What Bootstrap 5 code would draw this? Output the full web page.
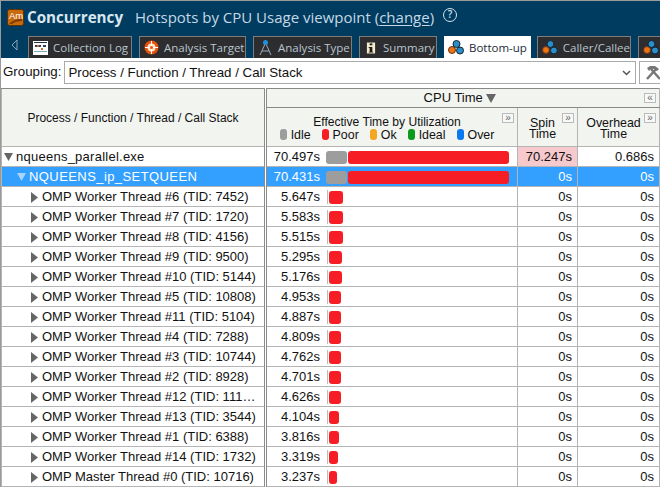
<!DOCTYPE html>
<html lang="en"><head><meta charset="utf-8"><title>Concurrency</title>
<link href="https://cdn.jsdelivr.net/npm/bootstrap@5.3.0/dist/css/bootstrap.min.css" rel="stylesheet">
<style>
html,body{margin:0;background:#fff;overflow:hidden}
body{width:660px;height:487px;font-family:"Liberation Sans",Arial,sans-serif;font-size:13px;color:#111}
.shell{width:660px;height:487px;border-top:1px solid #9a9a9a;border-left:1px solid #9a9a9a;overflow:hidden}
.topbar{background:#003c5f;height:57px;color:#cfe0ec;font-family:"Open Sans",sans-serif}
.titlerow{height:32px;padding-left:6px;gap:3px;white-space:nowrap}
.apptitle{font-weight:700;font-size:15.2px;color:#d8e6f0;margin-right:9px}
.viewname{font-size:15px;font-weight:400;color:#c6d8e5}
.viewname u{text-underline-offset:2px}
.helpmark{width:14px;height:14px;border:1.5px solid #d6e3ee;border-radius:50%;font-size:10px;line-height:11px;text-align:center;margin-left:6px;margin-bottom:4px;color:#d6e3ee;font-weight:600}
.tabrow{height:25px;white-space:nowrap;padding-left:10px;gap:7px;overflow:hidden}
.backarrow{flex:none;width:7px;margin-right:3px;margin-bottom:2px}
.vtab{height:22px;margin-top:3px;background:#2d2d2f;border:1px solid #7d7d7d;border-bottom:0;color:#b9c5cf;font-size:11.5px;padding:0 0 0 4px;gap:5px;flex:none}
.vtab.onpage{background:#fff;color:#1c2b3a;border-color:#fff;padding-left:3px;margin-right:-1px}
.tw-log{width:104px}.tw-target{width:107px}.tw-type{width:99px}.tw-sum{width:78px;padding-left:6px;gap:7px}.tw-bottom{width:87px}.tw-caller{width:94px}.tw-next{width:40px}
.grouprow{height:30px;padding:3px 0 0 2px;gap:2px;font-size:13.3px}
.grouplabel{line-height:22px;margin-right:1px}
.groupfield{width:572px;height:23px;border:1px solid #aaa;padding:1px 4px 0 3px;color:#111;flex:none}
.toolbtn{width:30px;height:23px;border:1px solid #aaa;margin-left:1px;flex:none;padding-left:4px}
.grid{table-layout:fixed;width:659px;border-collapse:collapse;margin:0;font-size:13px}
.grid th,.grid td{padding:1px 0 0;border:1px solid #b4b4b4;font-weight:400;height:20px;line-height:18px;white-space:nowrap;overflow:hidden;color:#111;background:#fff}
.grid thead th{background:#f2f4f0;text-align:center;font-size:12.1px;line-height:15px;position:relative;padding-top:0}
.grid tr:first-child th{border-top:1px solid #888}
.grid th.thick,.grid td.thick{border-right:3px double #8b8b8b}
.grid .hdrrule{border-bottom:1px solid #888}
.grid thead tr.low th{height:39px;vertical-align:top;padding:7px 10px 0 0}
.grid thead tr.top th{height:19px;line-height:16px}
.grid thead th.sidehead{vertical-align:middle;font-size:12px}
.grid thead th.cputitle{font-size:13px;padding-right:6px}
.grid thead tr.low th.stack2{font-size:12.4px;line-height:11px;padding-top:10px;padding-right:10px}
.keyset{gap:11px;justify-content:center;font-size:12.4px;line-height:14px;margin-top:-2px}
.keychip{width:7px;height:11px;border-radius:3px;display:inline-block;margin-right:4px;vertical-align:-1px}
.pin{position:absolute;top:5px;right:3px;width:12px;height:10px;border:1px solid #bbb;background:#f8f8f8;font-size:10px;line-height:7px;color:#666;text-align:center}
.tr-top-pin{top:4px}
.num{text-align:right;padding-right:5px!important}
.treecell{padding-left:2px!important;position:relative}
.tree0{padding-left:12px;letter-spacing:.25px}
.tree1{padding-left:25px;letter-spacing:.42px}
.tree2{padding-left:38px}
.twist{position:absolute;top:6px}
.hot{background:#f6c9cd!important}
.grid tr.picked td{background:#33a0ff;color:#fff;border-top:1px dashed #000;border-bottom:1px dashed #000}
.barcell{display:flex;height:18px;align-items:center}
.timeval{width:53px;text-align:right;flex:none}
.barzone{display:flex;align-items:center;margin-left:6px;height:14px}
.tickzone{margin-left:7px;border-left:1px solid #bbb}
.idlebar{height:13px;background:#9d9d9d;border-radius:3px;flex:none;width:21px}
.poorbar{height:13px;background:#f61e24;border-radius:3px;flex:none;margin-left:1px}
</style></head><body>
<div class="shell">
<div class="topbar">
 <div class="titlerow d-flex align-items-center">
  <svg width="17" height="17" viewBox="0 0 17 17"><rect x=".5" y=".5" width="16" height="16" rx="2" fill="#c8690c" stroke="#5b3208"/><path d="M2 15C6 11 10 10 15 10v2C11 12 7 13 5 15z" fill="#7a3d06"/><text x="2" y="10" font-size="9.500" font-family="Liberation Sans" fill="#fff">Am</text></svg>
  <span class="apptitle">Concurrency</span>
  <span class="viewname">Hotspots by CPU Usage viewpoint (<u>change</u>)</span>
  <span class="helpmark">?</span>
 </div>
 <div class="tabrow d-flex">
  <svg class="backarrow align-self-center" width="7" height="12" viewBox="0 0 7 12"><path d="M6 1 1 6l5 5z" fill="none" stroke="#8fa5b3"/></svg>
  <div class="vtab tw-log d-flex align-items-center"><svg width="15" height="14" viewBox="0 0 15 14"><rect width="15" height="14" fill="#fff"/><rect x="1" y="1" width="13" height="1" fill="#234"/><path d="M2 4h2v2H2zM6 4h2v2H6zM10 4h3v2h-3z" fill="#246"/><path d="M4 4h2v2H4zM8 7h2v2H8z" fill="#d63"/><rect x="1" y="10" width="13" height="1" fill="#7ab"/></svg>Collection Log</div>
  <div class="vtab tw-target d-flex align-items-center"><svg width="15" height="15" viewBox="0 0 15 15"><circle cx="7.500" cy="7.500" r="7" fill="#e8500e"/><circle cx="7.500" cy="7.500" r="4" fill="#fbe5c8"/><path d="M7.500 1v13M1 7.500h13" stroke="#fff"/><circle cx="7.500" cy="7.500" r="1.500" fill="#e8500e"/></svg>Analysis Target</div>
  <div class="vtab tw-type d-flex align-items-center"><svg width="15" height="17" viewBox="0 0 15 17"><path d="M7.500 4 2 16M7.500 4 13 16M4 12h7" stroke="#9ab" fill="none"/><circle cx="7.500" cy="3.500" r="2.500" fill="#1e90e0"/></svg>Analysis Type</div>
  <div class="vtab tw-sum d-flex align-items-center"><svg width="10" height="14" viewBox="0 0 11 14"><rect x="1" y="1" width="9" height="12" fill="#f4ecd0"/><rect x="4" y="2" width="3" height="2" fill="#201a10"/><path d="M3 6h4v5h1v1H3v-1h1V7H3z" fill="#201a10"/></svg>Summary</div>
  <div class="vtab tw-bottom onpage d-flex align-items-center"><svg width="16" height="15" viewBox="0 0 16 15"><circle cx="4" cy="10" r="3.500" fill="#ee7410" stroke="#632"/><circle cx="8.500" cy="4" r="3.500" fill="#2a8fc8" stroke="#123"/><circle cx="12" cy="10.500" r="3.500" fill="#2a8fc8" stroke="#123"/></svg>Bottom-up</div>
  <div class="vtab tw-caller d-flex align-items-center"><svg width="16" height="15" viewBox="0 0 16 15"><circle cx="4" cy="10" r="3.500" fill="#ee7410" stroke="#632"/><circle cx="8.500" cy="4" r="3.500" fill="#2a8fc8" stroke="#123"/><circle cx="12" cy="10.500" r="3.500" fill="#2a8fc8" stroke="#123"/></svg>Caller/Callee</div>
  <div class="vtab tw-next d-flex align-items-center"><svg width="16" height="15" viewBox="0 0 16 15"><circle cx="4" cy="10" r="3.500" fill="#ee7410" stroke="#632"/><circle cx="8.500" cy="4" r="3.500" fill="#2a8fc8" stroke="#123"/><circle cx="12" cy="10.500" r="3.500" fill="#2a8fc8" stroke="#123"/></svg></div>
 </div>
</div>
<div class="grouprow d-flex align-items-start">
 <span class="grouplabel">Grouping:</span>
 <div class="groupfield d-flex align-items-center justify-content-between"><span>Process / Function / Thread / Call Stack</span><svg width="9" height="6" viewBox="0 0 9 6"><path d="M1 1l3.500 3.500L8 1" fill="none" stroke="#555" stroke-width="1.500"/></svg></div>
 <div class="toolbtn d-flex align-items-center"><svg width="18" height="17" viewBox="0 0 18 17"><path d="M3 15 13 4" stroke="#777" stroke-width="2.500" fill="none"/><path d="M7 5 16 15" stroke="#777" stroke-width="2.500" fill="none"/><path d="M3 4 6 2h5l4 3-2 2-3-2H7L5 7z" fill="#777"/></svg></div>
</div>
<table class="grid">
<colgroup><col style="width:264px"><col style="width:252px"><col style="width:60px"><col></colgroup>
<thead>
<tr class="top"><th rowspan="2" class="thick sidehead">Process / Function / Thread / Call Stack</th><th colspan="3" class="cputitle hdrrule">CPU Time <svg width="10" height="9" viewBox="0 0 10 9"><path d="M0 0h10L5 9z" fill="#666"/></svg><span class="pin tr-top-pin">«</span></th></tr>
<tr class="low"><th>Effective Time by Utilization<span class="pin">»</span>
 <div class="keyset d-flex"><span><i class="keychip" style="background:#9d9d9d"></i>Idle</span><span><i class="keychip" style="background:#f61e24"></i>Poor</span><span><i class="keychip" style="background:#f5a623"></i>Ok</span><span><i class="keychip" style="background:#0a9a1c"></i>Ideal</span><span><i class="keychip" style="background:#0a78f0"></i>Over</span></div></th>
 <th class="stack2">Spin<br>Time<span class="pin">»</span></th><th class="stack2">Overhead<br>Time<span class="pin">»</span></th></tr>
</thead>
<tbody id="rows">
<tr><td class="treecell thick"><svg class="twist" style="left:2px" width="9" height="8" viewBox="0 0 9 8"><path d="M0 0h9L4.500 8z" fill="#666"/></svg><span class="tree0">nqueens_parallel.exe</span></td><td><div class="barcell"><span class="timeval">70.497s</span><div class="barzone"><div class="idlebar"></div><div class="poorbar" style="width:161px"></div></div></div></td><td class="num hot">70.247s</td><td class="num">0.686s</td></tr>
<tr class="picked"><td class="treecell thick"><svg class="twist" style="left:15px" width="9" height="8" viewBox="0 0 9 8"><path d="M0 0h9L4.500 8z" fill="#a8d4fa"/></svg><span class="tree1">NQUEENS_ip_SETQUEEN</span></td><td><div class="barcell"><span class="timeval">70.431s</span><div class="barzone"><div class="idlebar"></div><div class="poorbar" style="width:161px"></div></div></div></td><td class="num">0s</td><td class="num">0s</td></tr>
</tbody></table>
</div>
<script>
const d=[["OMP Worker Thread #6 (TID: 7452)",5.647],["OMP Worker Thread #7 (TID: 1720)",5.583],["OMP Worker Thread #8 (TID: 4156)",5.515],["OMP Worker Thread #9 (TID: 9500)",5.295],["OMP Worker Thread #10 (TID: 5144)",5.176],["OMP Worker Thread #5 (TID: 10808)",4.953],["OMP Worker Thread #11 (TID: 5104)",4.887],["OMP Worker Thread #4 (TID: 7288)",4.809],["OMP Worker Thread #3 (TID: 10744)",4.762],["OMP Worker Thread #2 (TID: 8928)",4.701],["OMP Worker Thread #12 (TID: 111…",4.626],["OMP Worker Thread #13 (TID: 3544)",4.104],["OMP Worker Thread #1 (TID: 6388)",3.816],["OMP Worker Thread #14 (TID: 1732)",3.319],["OMP Master Thread #0 (TID: 10716)",3.237]];
document.getElementById('rows').insertAdjacentHTML('beforeend',d.map(([n,t])=>`<tr><td class="treecell thick"><svg class="twist" style="left:29px;top:5px" width="7" height="11" viewBox="0 0 7 11"><path d="M0 0l7 5.500L0 11z" fill="#666"/></svg><span class="tree2">${n}</span></td><td><div class="barcell"><span class="timeval">${t.toFixed(3)}s</span><div class="barzone tickzone"><div class="poorbar" style="width:${(t*2.3+1).toFixed(1)}px"></div></div></div></td><td class="num">0s</td><td class="num">0s</td></tr>`).join(''));
</script>
</body></html>
